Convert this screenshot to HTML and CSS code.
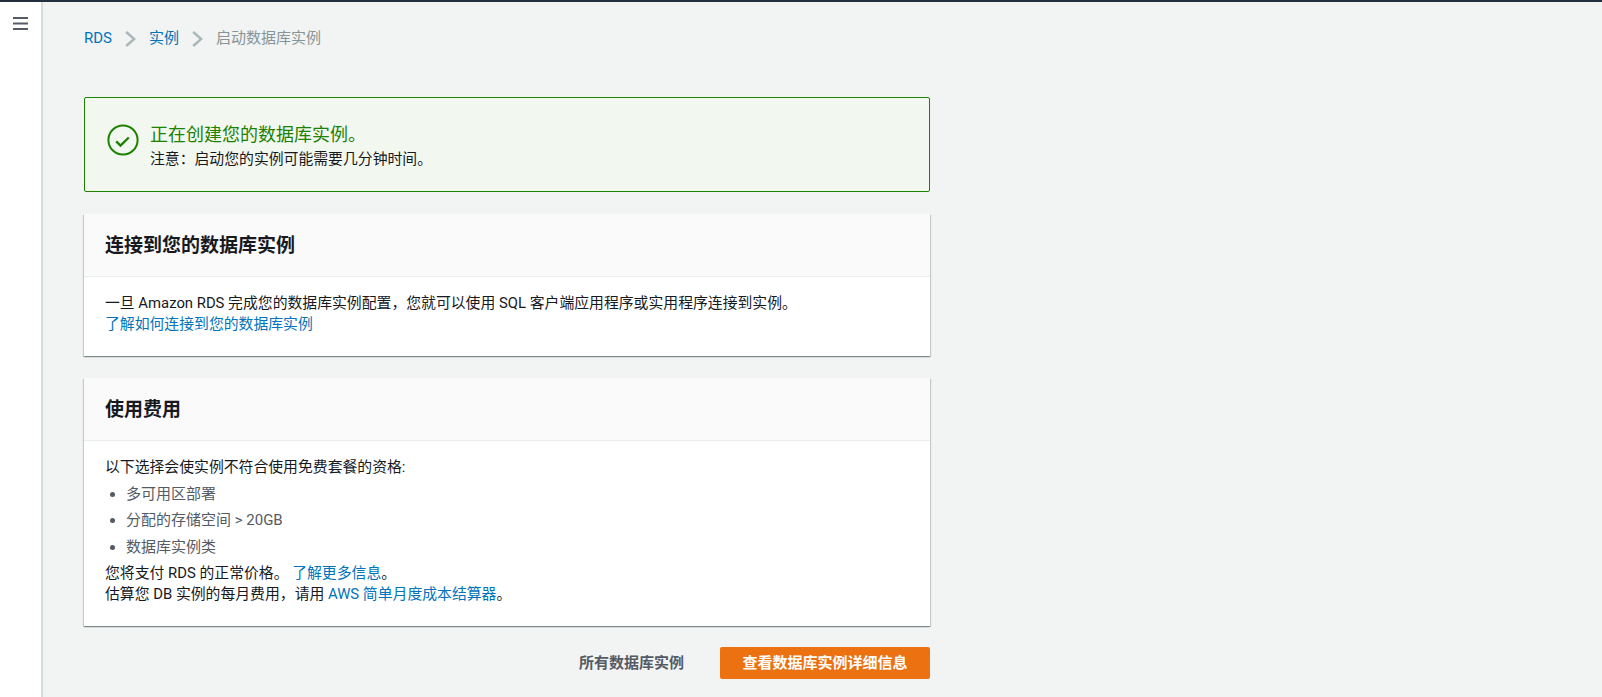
FILE: index.html
```html
<!DOCTYPE html>
<html lang="zh-CN">
<head>
<meta charset="utf-8">
<title>启动数据库实例</title>
<link rel="stylesheet" href="styles.css">
</head>
<body>
<div class="topbar"></div>
<div class="shell">
  <aside class="sidebar">
    <svg class="menu-icon" width="15" height="13" viewBox="0 0 15 13"><path d="M0 1h15M0 6.5h15M0 12h15" stroke="#545b64" stroke-width="2" fill="none"/></svg>
  </aside>
  <main class="content">
    <nav class="crumbs">
      <a class="link">RDS</a>
      <svg class="chev" width="11" height="18" viewBox="0 0 11 18"><path d="M1.2 3l8 7-8 7" stroke="#aab7b8" stroke-width="2.4" fill="none"/></svg>
      <a class="link">实例</a>
      <svg class="chev" width="11" height="18" viewBox="0 0 11 18"><path d="M1.2 3l8 7-8 7" stroke="#aab7b8" stroke-width="2.4" fill="none"/></svg>
      <span class="crumb-current">启动数据库实例</span>
    </nav>
    <section class="alert">
      <svg class="alert-icon" width="32" height="32" viewBox="0 0 32 32"><circle cx="16" cy="16" r="14.6" stroke="#1d8102" stroke-width="2" fill="none"/><path d="M9.2 17.3l4.3 4.2 8.3-8" stroke="#1d8102" stroke-width="2.4" fill="none"/></svg>
      <div class="alert-text">
        <div class="alert-title">正在创建您的数据库实例。</div>
        <div class="alert-note">注意：启动您的实例可能需要几分钟时间。</div>
      </div>
    </section>
    <section class="card">
      <h2 class="card-head">连接到您的数据库实例</h2>
      <div class="card-body">
        <div>一旦 Amazon RDS 完成您的数据库实例配置，您就可以使用 SQL 客户端应用程序或实用程序连接到实例。</div>
        <a class="link">了解如何连接到您的数据库实例</a>
      </div>
    </section>
    <section class="card">
      <h2 class="card-head">使用费用</h2>
      <div class="card-body">
        <div>以下选择会使实例不符合使用免费套餐的资格:</div>
        <ul class="list">
          <li>多可用区部署</li>
          <li>分配的存储空间 &gt; 20GB</li>
          <li>数据库实例类</li>
        </ul>
        <div>您将支付 RDS 的正常价格。 <a class="link">了解更多信息</a>。</div>
        <div>估算您 DB 实例的每月费用，请用 <a class="link">AWS 简单月度成本结算器</a>。</div>
      </div>
    </section>
    <div class="actions">
      <a class="btn-text">所有数据库实例</a>
      <a class="btn-primary">查看数据库实例详细信息</a>
    </div>
  </main>
</div>
</body>
</html>
```
FILE: styles.css
```css
* { box-sizing: border-box; }
html, body { margin: 0; height: 100%; overflow: hidden; }
body {
  font-family: Roboto, "Noto Sans CJK SC", sans-serif;
  font-size: 15px;
  line-height: 21px;
  color: #16191f;
  background: #f2f3f3;
}
.topbar { height: 2px; background: #232f3e; }
.shell { display: flex; height: 695px; }
.sidebar {
  width: 43px;
  flex: none;
  background: #fff;
  border-right: 2px solid #d5dbdb;
  padding: 14.5px 0 0 13px;
}
.menu-icon { display: block; }
.content { width: 846px; margin-left: 41px; flex: none; }
.link { color: #0073bb; }
.crumbs {
  display: flex;
  align-items: center;
  height: 22px;
  margin-top: 25px;
  gap: 13px;
}
.chev { flex: none; }
.crumb-current { color: #879596; }
.alert {
  display: flex;
  align-items: center;
  height: 95px;
  margin-top: 48px;
  padding-left: 22px;
  gap: 11px;
  background: #f2f8f0;
  border: 1px solid #1d8102;
  border-radius: 2px;
}
.alert-icon { flex: none; align-self: flex-start; margin-top: 26px; }
.alert-text { padding-top: 2px; }
.alert-title { font-size: 18px; line-height: 26px; color: #1d8102; }
.alert-note { font-size: 14.85px; line-height: 22px; }
.card {
  margin-top: 22px;
  background: #fff;
  box-shadow: 0 1px 1px 0 rgba(0,28,36,.3), 1px 1px 1px 0 rgba(0,28,36,.15), -1px 1px 1px 0 rgba(0,28,36,.15);
}
.card-head {
  margin: 0;
  height: 63px;
  padding: 0 21px;
  display: flex;
  align-items: center;
  font-size: 19px;
  font-weight: 700;
  background: #fafafa;
  border-bottom: 1px solid #eaeded;
}
.card-body { padding: 16px 21px 21px; font-size: 14.85px; }
.card-body > a { display: block; }
.list { margin: 0; padding: 0 0 0 21px; color: #545b64; font-size: 15px; }
.list li { margin: 5.5px 0; }
.actions {
  display: flex;
  justify-content: flex-end;
  align-items: center;
  gap: 36px;
  margin-top: 21px;
}
.btn-text { font-weight: 700; color: #545b64; }
.btn-primary {
  width: 210px;
  height: 32px;
  display: flex;
  align-items: center;
  justify-content: center;
  font-weight: 700;
  color: #fff;
  background: #ec7211;
  border-radius: 2px;
}
```
